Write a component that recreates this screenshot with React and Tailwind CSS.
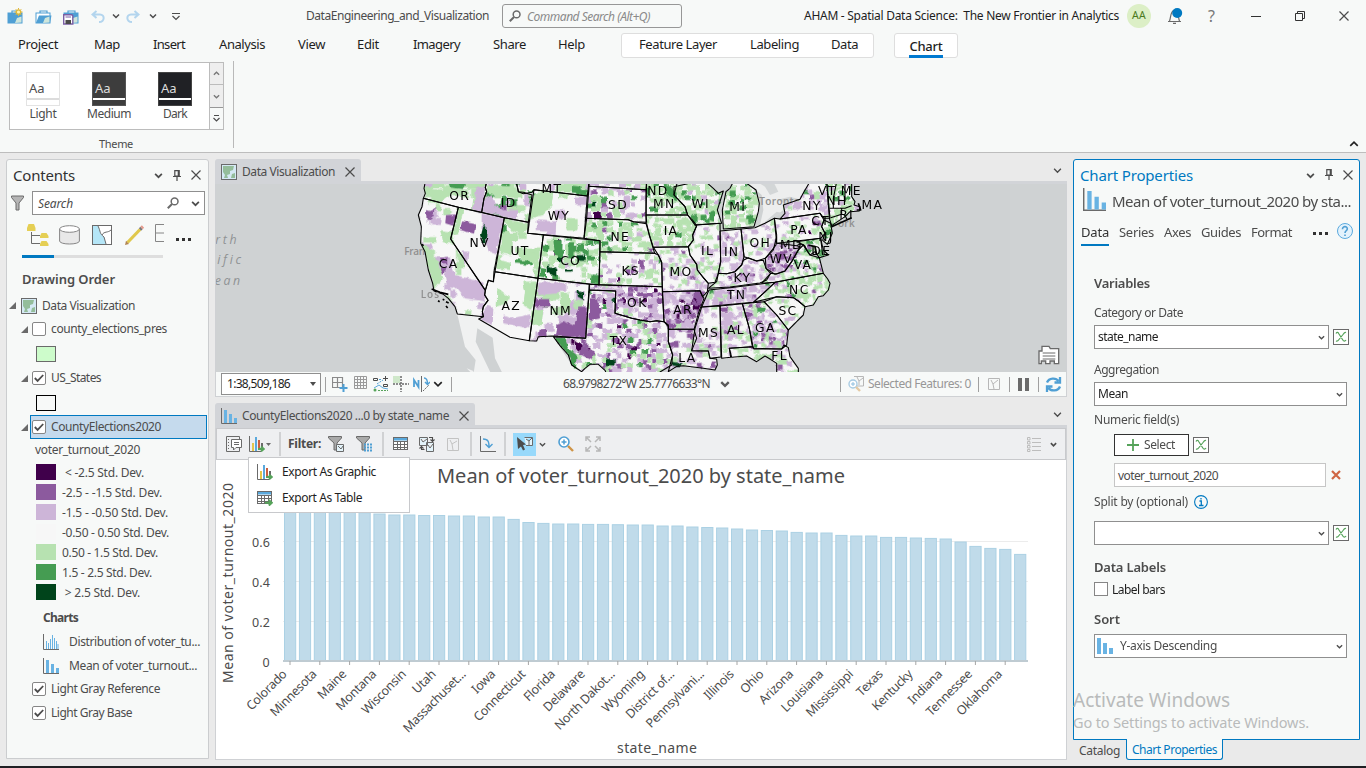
import React, { useLayoutEffect, useRef } from "react";

/* Text whose tracking is adjusted so that it spans a given width. */
function T({ w, className = "", children }) {
  const ref = useRef(null);
  useLayoutEffect(() => {
    const el = ref.current;
    el.style.letterSpacing = "0px";
    const natural = el.getBoundingClientRect().width;
    if (w) el.style.letterSpacing = (w - natural) / String(children).length + "px";
  }, [w, children]);
  return (
    <span ref={ref} className={"block w-fit whitespace-pre shrink-0 [font-variant-ligatures:none] " + className}>
      {children}
    </span>
  );
}

function Svg({ w = 16, h = 16, vb, className = "", children }) {
  return (
    <svg width={w} height={h} viewBox={vb || `0 0 ${w} ${h}`} fill="none" className={"block shrink-0 " + className}>
      {children}
    </svg>
  );
}

const Chevron = ({ className = "", color = "#4c4c4c", s = 8, sw = 1.5 }) => (
  <Svg w={s} h={s} vb="0 0 8 8" className={className}>
    <path d="M1 2.5 L4 5.5 L7 2.5" stroke={color} strokeWidth={sw} />
  </Svg>
);
const Close = ({ className = "", s = 10 }) => (
  <Svg w={s} h={s} vb="0 0 10 10" className={className}>
    <path d="M.5 .5 L9.5 9.5 M9.5 .5 L.5 9.5" stroke="#4c4c4c" strokeWidth="1.2" />
  </Svg>
);
const Pin = ({ className = "" }) => (
  <Svg w={8} h={11} className={className}>
    <path d="M1.8 .6 H6.2 V6 H1.8 Z M0 6.5 H8 M4 6.5 V11" stroke="#4c4c4c" strokeWidth="1.2" />
    <path d="M5.4 .6 V6" stroke="#4c4c4c" strokeWidth="1.4" />
  </Svg>
);
const Magnifier = ({ className = "" }) => (
  <Svg w={12} h={12} className={className}>
    <circle cx="7.6" cy="4.4" r="3.4" stroke="#6a6a6a" strokeWidth="1.5" />
    <path d="M5 7 L.8 11.2" stroke="#6a6a6a" strokeWidth="2" />
  </Svg>
);
const BarIcon = ({ w = 16, className = "" }) => (
  <Svg w={w} h={w} vb="0 0 16 16" className={className}>
    <path d="M.5 0 V15.5 H16" stroke="#6a6a6a" />
    <path d="M3 2 h3 v13 h-3z M8 6 h3 v9 h-3z M13 10 h3 v5 h-3z" fill="#69b3e3" />
  </Svg>
);
const SortIcon = ({ className = "" }) => (
  <Svg className={className}>
    <path d="M0 0h4v16h-4z M6 5h4v11h-4z M12 10h4v6h-4z" fill="#69b3e3" />
  </Svg>
);
const MapIcon = ({ className = "" }) => (
  <Svg className={className}>
    <rect x=".5" y=".5" width="15" height="15" fill="#d5e9f4" stroke="#6a6a6a" />
    <path d="M2 2 h11 l-1 4 l-3 1 l0 3 l-3 1 l1 3 h-4 l1-3 l-2-3z M11 10 l3 -1 v5 h-4z" fill="#94bd9a" />
  </Svg>
);
const ExportChart = ({ className = "" }) => (
  <Svg className={className}>
    <path d="M.5 0 V15.5 H12" stroke="#6a6a6a" />
    <path d="M3 7h2v8h-2z" fill="#e3c64a" />
    <path d="M6 1h2v14h-2z" fill="#5aa9dd" />
    <path d="M9 4h2v10h-2z" fill="#c9603f" />
    <path d="M12 7h2v4h-2z" fill="#6a6a6a" />
    <path d="M9 13 h5 M12 10.5 l2.8 2.5 l-2.8 2.5" stroke="#56a35a" strokeWidth="1.8" />
  </Svg>
);
const TableIcon = ({ arrow }) => (
  <Svg>
    <rect x=".5" y="1.5" width="14" height="12" fill="#fff" stroke="#6a6a6a" />
    <path d="M1 2 H14 V4.5 H1z" fill="#5aa9dd" />
    <path d="M1 5.5 H15 M1 8.5 H15 M1 11.500 H15 M4.5 5 V13 M7.500 5 V13 M11.5 5 V13" stroke="#6a6a6a" />
    {arrow && <path d="M8 12.8 h6 M11.8 10 l3 2.8 l-3 2.8" stroke="#56a35a" strokeWidth="2" />}
  </Svg>
);
const ExprIcon = ({ className = "" }) => (
  <Svg className={className}>
    <rect x=".5" y=".5" width="15" height="15" fill="#fff" stroke="#6a6a6a" />
    <path d="M3 4.5 C4 2.8 5 3 6 5 L9.5 10.5 C10.5 12.5 12 12.5 13 11 M13 3.5 C12 3 11 4 10 5.5 L6 10.5 C5 12 4 12.5 3 12" stroke="#56a35a" strokeWidth="1.2" />
  </Svg>
);
const Check = ({ on }) => (
  <Svg w={14} h={14} className="shrink-0">
    <rect x=".5" y=".5" width="13" height="13" rx="1.5" fill="#fff" stroke="#868686" />
    {on && <path d="M2.8 7 L5.6 9.9 L11.2 4" stroke="#4c4c4c" strokeWidth="1.8" />}
  </Svg>
);
const Tri = ({ className = "" }) => (
  <Svg w={7} h={7} className={className}>
    <path d="M7 0 V7 H0z" fill="#6a6a6a" />
  </Svg>
);
const Dots = ({ className = "" }) => (
  <div className={"flex gap-[3px] " + className}>
    <i className="size-[3px] bg-[#323232]" />
    <i className="size-[3px] bg-[#323232]" />
    <i className="size-[3px] bg-[#323232]" />
  </div>
);

/* ---------- title bar and ribbon ---------- */

const Briefcase = ({ kind }) => (
  <Svg w={17} h={17}>
    <path d="M5 5 V3 H12 V5" stroke="#4f9fd4" strokeWidth="1.2" />
    <rect x="1" y="5" width="14" height="10" fill={kind === "open" ? "#fff" : "#4f9fd4"} stroke="#4f9fd4" />
    {kind === "open" && <path d="M1 15 L4 7.5 H16.5 L15 15z" fill="#4f9fd4" />}
    <path d="M8 15 L10 10 L14.5 8.5 V14.5z" fill="#cfe6dc" />
    {kind === "new" && (
      <g>
        <circle cx="11.5" cy="4" r="2.2" fill="#fff3b0" stroke="#dfb83a" strokeWidth="1.3" />
        <path d="M11.5 0V1.5M11.5 6.5V8M7.5 4H9M14 4H15.5M8.7 1.2L9.8 2.3M13.2 5.7L14.3 6.8M14.3 1.2L13.2 2.3M9.8 5.7L8.7 6.8" stroke="#dfb83a" />
      </g>
    )}
    {kind === "save" && (
      <g>
        <path d="M.7 6.7 H8.8 L9.8 7.7 V16 H.7z" fill="#fff" stroke="#7b5fa5" strokeWidth="1.4" />
        <rect x="2.5" y="12" width="5.5" height="4" fill="#4c4c4c" />
        <path d="M2.5 9 H8" stroke="#7b5fa5" />
      </g>
    )}
  </Svg>
);
const Undo = ({ flip }) => (
  <Svg w={14} h={13} className={flip ? "-scale-x-100" : ""}>
    <path d="M5.5 1 L1.5 4.5 L5.5 8 M1.5 4.5 H9 C14 4.5 14 12 8 12" stroke="#b3d5ee" strokeWidth="2" />
  </Svg>
);

function TitleBar() {
  return (
    <div className="flex h-8 items-center">
      <div className="flex w-[306px] items-center pl-[7px]">
        <div className="w-7"><Briefcase kind="new" /></div>
        <div className="w-7"><Briefcase kind="open" /></div>
        <div className="w-[28px]"><Briefcase kind="save" /></div>
        <div className="w-[21px]"><Undo /></div>
        <div className="w-[14px]"><Chevron /></div>
        <div className="w-[23px]"><Undo flip /></div>
        <div className="w-[22px]"><Chevron /></div>
        <Svg w={10} h={9}><path d="M1 1.5H9M1.500 4L5 7.5L8.5 4" stroke="#4c4c4c" strokeWidth="1.2" /></Svg>
      </div>
      <div className="w-[196px]"><T w={183} className="text-xs text-[#4c4c4c]">DataEngineering_and_Visualization</T></div>
      <div className="flex h-6 w-[180px] items-center rounded-[3px] border border-[#979797] pl-[6px]">
        <Magnifier className="mr-[6px]" />
        <T w={123} className="pt-px text-xs italic text-[#8a8a8a]">Command Search (Alt+Q)</T>
      </div>
      <div className="ml-[122px] w-[323px]"><T w={315} className="text-xs text-[#1e1e1e]">AHAM - Spatial Data Science:  The New Frontier in Analytics</T></div>
      <div className="flex size-6 items-center justify-center rounded-full bg-[#dcefc6]"><T w={14} className="text-[10.5px] text-[#4b7a1e]">AA</T></div>
      <Svg w={16} h={16} className="ml-4">
        <path d="M1 13.5 H14 M2.5 13 C4 10 3 3 7.5 2 C12 3 11 10 12.5 13 M6 15.3H9" stroke="#6a6a6a" strokeWidth="1.2" />
        <circle cx="10.2" cy="5" r="5" fill="#0079c1" />
      </Svg>
      <div className="ml-[25px] w-[43px] text-base text-[#777]">?</div>
      <div className="h-px w-[10px] bg-[#323232]" />
      <Svg w={10} h={10} className="ml-[34px]"><path d="M.5 2.5H7.5V9.5H.5zM2.5 2V.5H9.5V7.5H8" stroke="#323232" /></Svg>
      <Close className="ml-[34px]" />
    </div>
  );
}

function Ribbon() {
  const tabs = [
    ["Project", 40, "w-[76px]"], ["Map", 26, "w-[59px]"], ["Insert", 32, "w-[66px]"], ["Analysis", 46, "w-[79px]"],
    ["View", 27, "w-[59px]"], ["Edit", 22, "w-[56px]"], ["Imagery", 47, "w-[80px]"], ["Share", 33, "w-[65px]"], ["Help", 27, "w-[63px]"],
  ];
  const themes = [
    ["Light", 27, "bg-white border-[#e3e3e3] text-[#4c4c4c]", "bg-[#dcdcdc]"],
    ["Medium", 44, "bg-[#3d3d3d] border-[#555] text-[#ddd]", "bg-white"],
    ["Dark", 24, "bg-[#202125] border-[#444] text-[#ddd]", "bg-white"],
  ];
  return (
    <div className="flex h-[153px] shrink-0 flex-col border-b border-[#bdbdbd] bg-[#f7f9f8]">
      <TitleBar />
      <div className="flex h-[26px] items-center pl-[18px]">
        {tabs.map(([t, w, c]) => <div key={t} className={c}><T w={w} className="text-[13px] text-[#1e1e1e]">{t}</T></div>)}
        <div className="flex h-[25px] w-[253px] items-center rounded-[3px] border border-[#dedede] bg-white pl-[17px]">
          <div className="w-[111px]"><T w={78} className="text-[13px] text-[#1e1e1e]">Feature Layer</T></div>
          <div className="w-[81px]"><T w={49} className="text-[13px] text-[#1e1e1e]">Labeling</T></div>
          <T w={27} className="text-[13px] text-[#1e1e1e]">Data</T>
        </div>
        <div className="ml-5 flex h-[25px] w-16 flex-col items-center justify-between rounded-[3px] border border-[#dedede] bg-white">
          <T w={33} className="text-[13px] font-medium leading-[24px] text-[#1e1e1e]">Chart</T>
          <div className="-mt-[3px] -mb-px h-[3px] w-[34px] shrink-0 bg-[#0079d0]" />
        </div>
      </div>
      <div className="flex flex-1 pt-[3px]">
        <div className="h-[87px] w-[234px] shrink-0 border-r border-[#b9b9b9] pl-[9px]">
          <div className="mt-[1px] flex h-[68px] w-[215px] border border-[#bcbcbc] bg-white">
            <div className="flex flex-1">
              {themes.map(([t, w, c, l]) => (
                <div key={t} className="flex w-[66px] flex-col items-center pt-[9px]">
                  <div className={"flex size-[34px] flex-col border " + c}>
                    <span className="h-[25px] pl-[2px] pt-[3px] text-[13px] leading-[24px]">Aa</span>
                    <span className={"h-[2px] " + l} />
                  </div>
                  <T w={w} className="text-xs leading-[16px] text-[#4c4c4c]">{t}</T>
                </div>
              ))}
            </div>
            <div className="flex w-[14px] flex-col border-l border-[#bcbcbc] bg-[#eeeeee]">
              <div className="flex h-[22px] items-center justify-center border-b border-[#bcbcbc]"><Chevron s={7} className="rotate-180" color="#777" /></div>
              <div className="flex h-[23px] items-center justify-center border-b border-[#979797]"><Chevron s={7} color="#777" /></div>
              <div className="flex flex-1 items-center justify-center bg-[#f7f9f8]"><Svg w={7} h={7}><path d="M1 .5H6M.5 3L3.5 6L6.5 3" stroke="#4c4c4c" strokeWidth="1.2" /></Svg></div>
            </div>
          </div>
          <div className="flex h-[19px] justify-center pr-[10px] pt-[6px]"><T w={34} className="text-[11px] leading-4 text-[#4c4c4c]">Theme</T></div>
        </div>
        <div className="flex h-[88px] flex-1 items-end justify-end pr-[7px]"><Chevron s={10} sw={1.3} className="rotate-180" color="#222" /></div>
      </div>
    </div>
  );
}

/* ---------- contents pane ---------- */

function Contents() {
  const classes = [
    [" < -2.5 Std. Dev.", 82, "bg-[#40004b]"], ["-2.5 - -1.5 Std. Dev.", 100, "bg-[#8c5a9e]"], ["-1.5 - -0.50 Std. Dev.", 106, "bg-[#cdb5d8]"],
    ["-0.50 - 0.50 Std. Dev.", 107, "bg-[#f7f7f7]"], ["0.50 - 1.5 Std. Dev.", 96, "bg-[#b7e2b1]"], ["1.5 - 2.5 Std. Dev.", 90, "bg-[#459c52]"], [" > 2.5 Std. Dev.", 78, "bg-[#00441b]"],
  ];
  return (
    <div className="ml-[6px] mt-[6px] flex h-[600px] w-[203px] shrink-0 flex-col rounded-t-[3px] border border-[#cbcdcf] bg-[#f7f9f8] text-[#4c4c4c]">
      <div className="flex h-[30px] items-center pl-[6px]">
        <T w={62} className="text-[15px] text-[#323232]">Contents</T>
        <Chevron className="ml-[79px] mr-[10px]" s={9} />
        <Pin className="mr-[10px]" />
        <Close />
      </div>
      <div className="flex h-6 items-center pl-1 mt-px">
        <Svg w={13} h={16} className="mr-2"><path d="M.5 1H12.5V2.5L8 8V15H5V8L.5 2.5z" fill="#b5b5b5" stroke="#6a6a6a" /></Svg>
        <div className="flex h-6 w-[173px] items-center border border-[#8f8f8f] bg-white pl-[5px]">
          <T w={35} className="mr-[94px] pt-px text-xs italic">Search</T>
          <Magnifier className="mr-[12px]" />
          <Chevron s={9} />
        </div>
      </div>
      <div className="flex h-10 items-center pl-5">
        <Svg w={22} h={22} className="mr-[10px]">
          <path d="M4.5 8V19.5H13M4 11.500H13" stroke="#6a6a6a" />
          <path d="M1.5 0H7L8.5 4V7H0V4zM14.5 9H19.5L21.5 12V14H13V12zM14.5 17H19.5L21.5 20V22H13V20z" fill="#e5cf54" />
        </Svg>
        <Svg w={21} h={20} className="mr-3"><path d="M.6 4V16C.6 20 20.4 20 20.4 16V4" fill="#e8e8e8" stroke="#868686" /><ellipse cx="10.5" cy="4" rx="9.9" ry="3.3" fill="#fff" stroke="#868686" /></Svg>
        <Svg w={20} h={20} className="mr-[13px]"><rect x=".5" y=".5" width="19" height="19" fill="#fff" stroke="#6a6a6a" /><path d="M1 1H6C9 7 7 8 12 12L14 19H1z" fill="#b5e6f7" /><path d="M6 1C9 7 7 8 12 12L14 19M10 10C12 6 16 8 19 5" stroke="#6a6a6a" /></Svg>
        <Svg w={20} h={20} className="mr-[10px]"><path d="M2.5 17.5L15 4.5" stroke="#e0c84c" strokeWidth="3.2" /><path d="M15 4.5L16.5 3" stroke="#777" strokeWidth="3.2" /><path d="M16.5 3L18 1.5" stroke="#e49a8c" strokeWidth="3.2" /><path d="M0 20L1 15.8L4 19z" fill="#b18452" /></Svg>
        <Svg w={9} h={18} className="mb-1 mr-3"><path d="M9 .5H.5V17.5H9M.5 9H9" stroke="#868686" /></Svg>
        <Dots className="mt-2" />
      </div>
      <div className="ml-[15px] flex h-[3px] w-[141px] bg-[#dedede]"><div className="w-8 bg-[#0079c1]" /></div>
      <div className="flex h-[36px] items-center pl-[15px] pt-[7px]"><T w={93} className="text-[13px] font-semibold">Drawing Order</T></div>
      <div className="flex h-[23px] items-center pl-[2px]"><Tri className="mr-[5px]" /><MapIcon className="mr-[5px]" /><T w={93} className="text-xs">Data Visualization</T></div>
      <div className="flex h-6 items-center pl-[14px]"><Tri className="mr-[4px]" /><Check /><T w={116} className="ml-[5px] text-xs">county_elections_pres</T></div>
      <div className="flex h-[25px] items-center pl-[29px]"><div className="h-4 w-5 border border-[#6a6a6a] bg-[#cdfccb]" /></div>
      <div className="flex h-6 items-center pl-[14px]"><Tri className="mr-[4px]" /><Check on /><T w={50} className="ml-[5px] text-xs">US_States</T></div>
      <div className="flex h-[25px] items-center pl-[29px]"><div className="h-4 w-5 border border-black" /></div>
      <div className="flex h-6 items-center pl-[14px]"><Tri className="mr-[2px]" /><div className="flex h-6 w-[177px] items-center border border-[#0079c1] bg-[#c5daed] pl-px"><Check on /><T w={110} className="ml-[5px] text-xs">CountyElections2020</T></div></div>
      <div className="flex h-[23px] items-center pb-[2px] pl-[28px]"><T w={105} className="text-xs">voter_turnout_2020</T></div>
      {classes.map(([t, w, c]) => (
        <div key={t} className="flex h-5 items-center pl-[29px]"><div className={"mr-[6px] h-4 w-5 " + c} /><T w={w} className="pt-px text-xs">{t}</T></div>
      ))}
      <div className="flex h-7 items-center pl-[36px] pt-[3px]"><T w={35} className="text-xs font-bold">Charts</T></div>
      <div className="flex h-6 items-center pl-[36px]">
        <Svg className="mr-[10px]"><path d="M.5 0V15.5H16" stroke="#6a6a6a" /><path d="M3.5 15V7M5.5 15V9M7.5 15V5M9.5 15V1M11.5 15V4M13.5 15V7M15 15V10" stroke="#69b3e3" /></Svg>
        <T w={131} className="text-xs">Distribution of voter_tu...</T>
      </div>
      <div className="flex h-6 items-center pl-[36px]"><BarIcon className="mr-[10px]" /><T w={128} className="text-xs">Mean of voter_turnout...</T></div>
      <div className="-mt-px flex h-6 items-center pl-[25px]"><Check on /><T w={109} className="ml-[5px] text-xs">Light Gray Reference</T></div>
      <div className="flex h-6 items-center pl-[25px]"><Check on /><T w={81} className="ml-[5px] text-xs">Light Gray Base</T></div>
    </div>
  );
}

/* ---------- map ---------- */

const COL = ["#40004b", "#8c5a9e", "#cdb5d8", "#f7f7f7", "#b7e2b1", "#459c52", "#00441b"];
/* name, outline, cell size, weights per class in percent */
const STATES = [
  ["OR", "648,70 642,100 646,115 640,130 745,157 815,172 822,130 830,110 826,98 832,70", 38, [0, 0, 2, 18, 76, 4, 0]],
  ["ID", "832,70 826,98 830,110 822,130 815,172 883,188 955,202 966,120 940,112 925,110 922,95 915,70", 22, [0, 2, 16, 36, 36, 10, 0]],
  ["MT", "915,70 922,95 925,110 940,116 966,112 972,104 1132,123 1138,70", 22, [0, 4, 16, 30, 34, 16, 0]],
  ["WY", "972,104 1132,123 1122,250 953,235", 32, [0, 0, 14, 66, 20, 0, 0]],
  ["CA", "640,130 745,157 722,252 826,406 824,420 834,436 820,455 817,470 820,485 742,477 735,455 715,430 700,418 672,408 668,385 655,345 645,290 632,265 634,215 625,180 636,155", 20, [0, 0, 14, 72, 14, 0, 0]],
  ["NV", "745,157 883,188 852,350 850,380 835,376 826,406 722,252", 44, [0, 0, 0, 100, 0, 0, 0]],
  ["UT", "883,188 955,202 953,235 1000,240 984,370 855,350", 24, [0, 0, 0, 70, 28, 2, 0]],
  ["CO", "1000,240 1170,257 1167,390 984,370", 17, [2, 1, 3, 30, 48, 12, 4]],
  ["AZ", "855,350 984,370 958,557 900,547 806,492 820,485 817,470 820,455 834,436 824,420 826,406 835,376 850,380", 50, [0, 0, 0, 100, 0, 0, 0]],
  ["NM", "984,370 1138,388 1127,550 1030,543 985,545 980,558 958,557", 24, [0, 4, 44, 38, 14, 0, 0]],
  ["ND", "1138,70 1310,70 1308,104 1137,94", 16, [0, 6, 26, 36, 24, 8, 0]],
  ["SD", "1137,94 1308,104 1308,180 1310,202 1270,200 1255,194 1130,190", 17, [2, 8, 26, 34, 24, 4, 2]],
  ["NE", "1130,190 1255,194 1270,200 1310,206 1318,240 1328,275 1334,295 1170,290 1170,257 1122,250", 15, [0, 1, 7, 36, 48, 8, 0]],
  ["KS", "1170,290 1334,295 1345,300 1355,322 1357,395 1167,390", 14, [1, 2, 18, 52, 26, 1, 0]],
  ["OK", "1138,388 1357,395 1362,500 1340,497 1320,500 1290,495 1265,490 1240,482 1215,475 1217,408 1138,405", 15, [2, 34, 44, 18, 2, 0, 0]],
  ["TX", "1138,405 1217,408 1215,475 1240,482 1265,490 1290,495 1320,500 1340,497 1362,500 1375,515 1375,560 1388,600 1385,630 1350,651 1340,680 1200,680 1185,646 1165,628 1140,628 1125,640 1115,650 1085,630 1075,600 1050,572 1030,545 1127,550", 15, [3, 12, 37, 28, 14, 4, 2]],
  ["MN", "1310,70 1405,70 1392,120 1425,155 1433,180 1308,180", 15, [0, 0, 3, 30, 57, 10, 0]],
  ["IA", "1308,180 1433,180 1448,196 1460,212 1448,240 1450,255 1435,275 1330,277 1318,240 1308,205", 14, [0, 0, 2, 30, 64, 4, 0]],
  ["MO", "1330,277 1435,275 1440,300 1460,328 1462,345 1480,368 1495,385 1492,410 1478,425 1470,407 1357,410 1355,322 1345,300", 13, [0, 2, 32, 56, 10, 0, 0]],
  ["AR", "1357,410 1470,407 1478,425 1482,430 1465,475 1453,520 1452,523 1375,523 1375,510 1362,500", 15, [4, 44, 42, 9, 1, 0, 0]],
  ["LA", "1375,523 1452,523 1460,550 1445,587 1495,588 1500,610 1520,612 1522,630 1515,645 1480,640 1420,632 1400,634 1375,650 1388,600 1375,560", 15, [0, 8, 38, 36, 16, 2, 0]],
  ["MS", "1475,456 1530,453 1533,606 1500,610 1495,588 1445,587 1455,520", 13, [0, 3, 36, 49, 12, 0, 0]],
  ["AL", "1530,453 1597,446 1618,520 1627,575 1558,580 1562,607 1535,610", 14, [0, 2, 40, 44, 14, 0, 0]],
  ["GA", "1597,446 1662,440 1700,480 1735,525 1730,570 1715,582 1630,580 1618,520", 12, [0, 12, 36, 30, 20, 2, 0]],
  ["FL", "1558,580 1628,575 1632,582 1715,582 1722,570 1735,578 1740,605 1765,640 1765,680 1705,680 1700,650 1700,625 1680,612 1665,603 1640,620 1610,603 1565,607", 16, [0, 2, 18, 40, 38, 2, 0]],
  ["SC", "1662,440 1700,425 1750,428 1765,438 1785,455 1780,480 1760,500 1735,525 1700,480", 13, [0, 1, 8, 76, 15, 0, 0]],
  ["NC", "1695,382 1840,355 1853,372 1860,385 1855,405 1840,422 1825,425 1810,450 1785,455 1765,438 1750,428 1700,425 1630,442 1660,415", 13, [0, 1, 4, 38, 52, 5, 0]],
  ["TN", "1497,405 1560,398 1695,382 1660,415 1630,442 1475,456", 13, [0, 10, 64, 22, 3, 1, 0]],
  ["KY", "1495,400 1520,380 1525,355 1550,356 1575,350 1595,330 1600,316 1615,308 1640,318 1660,316 1668,340 1682,355 1670,375 1650,384 1560,396", 12, [0, 10, 36, 42, 12, 0, 0]],
  ["VA", "1655,385 1682,355 1700,357 1725,348 1745,320 1765,285 1780,270 1790,285 1800,300 1828,308 1840,355 1695,382", 12, [0, 1, 16, 34, 40, 9, 0]],
  ["WV", "1700,245 1700,265 1760,272 1770,275 1745,320 1725,348 1695,358 1668,340 1666,310 1690,285", 12, [0, 38, 50, 12, 0, 0, 0]],
  ["OH", "1593,222 1635,218 1665,205 1693,190 1700,240 1698,270 1666,310 1640,318 1602,305", 13, [0, 1, 22, 62, 15, 0, 0]],
  ["IN", "1530,228 1593,222 1602,305 1595,330 1575,350 1550,356 1525,355 1532,320", 13, [0, 5, 52, 37, 6, 0, 0]],
  ["IL", "1455,210 1530,205 1532,320 1525,355 1515,382 1495,385 1480,368 1462,345 1460,328 1440,300 1435,275 1450,255 1448,240 1460,212", 13, [0, 1, 18, 54, 27, 0, 0]],
  ["WI", "1392,95 1430,87 1475,70 1510,100 1525,115 1540,108 1522,165 1535,205 1455,210 1433,180 1425,155 1392,120", 14, [0, 0, 3, 34, 55, 8, 0]],
  ["MI", "1548,110 1560,100 1575,70 1610,85 1638,105 1648,145 1645,170 1632,215 1540,222 1537,165", 14, [0, 0, 3, 30, 58, 8, 1]],
  ["PA", "1693,190 1710,192 1830,175 1842,195 1835,215 1845,235 1832,250 1700,265", 13, [1, 1, 12, 66, 20, 0, 0]],
  ["NY", "1710,192 1725,175 1720,150 1770,133 1782,110 1800,80 1850,80 1860,190 1842,190 1830,175", 15, [0, 3, 38, 42, 16, 1, 0]],
  ["NJ", "1842,195 1862,205 1867,235 1852,268 1838,256 1845,235 1835,215", 12, [0, 1, 8, 30, 41, 18, 2]],
  ["MD", "1760,260 1832,250 1840,285 1855,300 1828,308 1815,290 1800,300 1780,270", 12, [0, 1, 10, 36, 43, 10, 0]],
  ["NE2", "1850,80 1925,70 1925,125 1935,140 1932,150 1950,155 1948,168 1920,170 1905,185 1865,212 1858,190", 14, [0, 0, 6, 26, 50, 16, 2]],
];
const EXTRA_BORDERS = "M1858 160H1905L1925 152M1862 188L1895 178V160M1880 80L1870 130V160M1905 80V140M1760 272C1775 262 1785 268 1790 285M1832 250L1838 300";
const PATCHES = [
  [3, "690,150 720,118 790,130 785,166 745,157"], [2, "800,95 826,98 815,172 788,166"], [5, "712,80 770,80 758,102 720,98"],
  [4, "832,90 915,95 925,112 920,130 880,120 850,118 830,112"], [2, "822,130 845,118 855,150 880,165 925,165 920,192 815,172"], [5, "876,125 890,125 890,150 870,150"],
  [5, "970,118 990,120 990,158 970,158"], [5, "1086,92 1112,95 1112,118 1086,116"],
  [2, "980,196 1042,200 1040,232 980,228"], [2, "1035,165 1065,165 1065,190 1035,188"], [2, "1095,125 1132,125 1130,150 1095,148"], [4, "990,108 1030,112 1025,150 1000,180 960,190 965,130"],
  [1, "648,165 660,168 680,160 668,185 650,200"], [2, "665,190 695,192 692,210 668,208"], [1, "708,180 742,178 728,212 706,205"], [1, "757,196 798,205 792,236 750,225"],
  [4, "745,157 760,162 745,235 724,240"], [6, "820,207 829,212 829,262 813,262"], [2, "815,175 883,188 858,295 835,288 826,240 815,230"], [6, "813,240 822,207 829,212 829,268"],
  [2, "755,290 778,290 775,320 760,325"], [2, "670,305 720,310 735,360 820,382 828,440 765,430 740,400 712,390 705,350 675,335"], [1, "690,338 706,338 702,358 690,356"], [1, "690,308 712,308 712,325 695,325"],
  [4, "630,260 650,275 680,310 700,370 670,405 655,345 645,290"], [4, "690,225 725,230 735,270 700,260"],
  [4, "885,192 955,205 940,240 900,225"], [4, "875,240 905,250 905,300 868,295"], [4, "855,310 905,325 900,345 860,340"], [5, "915,312 965,318 965,330 915,326"], [4, "920,285 985,300 985,325 925,310"],
  [5, "1030,255 1058,258 1056,312 1035,300"], [5, "1075,262 1092,262 1090,310 1075,310"], [5, "1100,265 1125,265 1125,295 1100,290"], [3, "1045,345 1115,335 1115,380 1050,375"], [6, "1010,330 1025,335 1042,345 1042,365 1022,358 1010,352"], [6, "1065,342 1085,342 1085,350 1065,350"], [5, "990,335 1008,340 1008,368 988,365"], [6, "1100,300 1124,300 1124,318 1100,316"], [5, "1145,355 1168,358 1166,388 1142,385"],
  [4, "940,380 980,380 970,450 962,465 940,450 945,410"], [4, "862,400 900,430 890,445 860,455"], [2, "812,488 830,450 850,460 848,510 815,495"],
  [2, "878,480 905,490 960,478 958,520 880,505"], [2, "985,380 1050,382 1045,415 985,420"], [1, "975,432 1020,432 1022,455 975,455"], [1, "1040,505 1060,498 1090,510 1125,520 1124,550 1035,543"], [1, "1105,455 1130,455 1128,545 1090,530"], [1, "985,522 1008,520 1010,545 985,545"], [6, "1103,408 1122,415 1122,435 1103,425"], [4, "1055,420 1080,420 1080,480 1050,470"], [4, "965,465 1000,465 995,510 960,505"],
  [5, "1035,548 1065,548 1075,580 1100,600 1098,640 1085,625 1075,600 1055,575"], [0, "1095,555 1120,572 1110,590 1095,580"], [1, "1115,572 1155,590 1145,615 1110,598"], [6, "1188,610 1218,615 1215,632 1188,630"], [0, "1152,172 1175,172 1175,190 1152,190"], [1, "1140,430 1165,430 1170,490 1140,495"], [0, "1265,572 1280,575 1278,588 1263,585"],
  [5, "1475,180 1490,178 1490,192 1475,195"], [5, "1500,172 1512,168 1512,200 1498,195"], [5, "1610,182 1630,176 1628,192 1608,195"], [1, "1452,410 1485,410 1470,450 1445,450"], [0, "1450,430 1460,430 1458,445"], [0, "1450,450 1475,450 1470,465 1452,462"],
  [6, "1385,620 1415,625 1412,635 1388,632"], [5, "1360,80 1400,110 1400,140 1370,120"],
];
const LABELS = [
  ["OR", 747, 122], ["ID", 894, 144], ["MT", 1024, 101], ["WY", 1045, 182], ["SD", 1222, 149], ["NE", 1229, 244], ["NV", 807, 264], ["UT", 928, 287], ["CO", 1080, 317], ["CA", 714, 326], ["KS", 1260, 347], ["AZ", 902, 452], ["NM", 1050, 467], ["OK", 1280, 443], ["TX", 1225, 557],
  ["ND", 1342, 107], ["MN", 1361, 147], ["WI", 1470, 147], ["MI", 1581, 156], ["IA", 1381, 228], ["IL", 1491, 288], ["IN", 1563, 290], ["OH", 1649, 263], ["PA", 1765, 224], ["NY", 1804, 152], ["VT", 1850, 107], ["ME", 1922, 107], ["NH", 1879, 136], ["MA", 1985, 150], ["RI", 1908, 180], ["CT", 1830, 197], ["NJ", 1846, 244], ["MD", 1742, 270], ["DE", 1832, 288], ["WV", 1712, 311], ["VA", 1777, 328], ["MO", 1411, 350], ["KY", 1595, 367], ["TN", 1578, 420], ["NC", 1766, 404], ["SC", 1732, 468], ["GA", 1664, 518], ["AL", 1576, 525], ["MS", 1494, 533], ["AR", 1417, 464], ["LA", 1430, 608], ["FL", 1707, 602],
];

function counties() {
  let seed = 7;
  const rnd = () => ((seed = (seed * 16807) % 2147483647) / 2147483647);
  return STATES.map(([name, pts, size, weights]) => {
    const p = pts.split(" ").map((q) => q.split(",").map(Number));
    const xs = p.map((q) => q[0]), ys = p.map((q) => q[1]);
    const cells = COL.map(() => "");
    for (let y = Math.min(...ys) - size / 2; y < Math.min(680, Math.max(...ys)); y += size)
      for (let x = Math.min(...xs) - size / 2; x < Math.max(...xs); x += size) {
        let r = rnd() * 100, k = 0;
        while (k < 6 && r >= weights[k]) r -= weights[k++];
        if (k === 3) continue;
        const s = k === 0 || k === 6 ? 0.7 : 0.85 + rnd() * 0.4;
        const jx = rnd() * size * 0.4, jy = rnd() * size * 0.4;
        cells[k] += `M${(x + jx).toFixed(0)} ${(y + jy).toFixed(0)}h${(size * s).toFixed(0)}v${(size * (0.8 + rnd() * 0.35)).toFixed(0)}h${(-size * s).toFixed(0)}z`;
      }
    return { name, pts, cells };
  });
}
const COUNTIES = counties();

function MapView() {
  return (
    <svg width="850" height="188" viewBox="18 87 2550 564" className="block bg-[#cfd2d3]">
      <defs>
        <filter id="rough" filterUnits="userSpaceOnUse" x="560" y="60" width="1440" height="620" colorInterpolationFilters="sRGB">
          <feTurbulence type="fractalNoise" baseFrequency="0.06" numOctaves="2" seed="3" />
          <feDisplacementMap in="SourceGraphic" scale="14" xChannelSelector="R" yChannelSelector="G" />
        </filter>
        {COUNTIES.map((s) => <clipPath key={s.name} id={"c" + s.name}><polygon points={s.pts} /></clipPath>)}
        <clipPath id="usa">{COUNTIES.map((s) => <polygon key={s.name} points={s.pts} />)}</clipPath>
      </defs>
      <path d="M742 478L815 485L900 545L1030 545L1085 630L1125 660H880L855 610L848 548L802 520L797 560L845 660H790L797 615L765 575z" fill="#f0f1f1" />
      <path d="M770 640L790 648V660z" fill="#f0f1f1" />
      <path d="M1120 640L1165 625L1200 660H1110z" fill="#f0f1f1" />
      <path d="M1610 80H1800L1782 110L1770 133L1725 145L1720 165L1690 190L1650 210L1660 165L1655 120z" fill="#edeeee" />
      <path d="M1640 80H1690L1705 110L1680 120L1665 95zM1725 145L1765 132L1740 125L1700 135zM1660 205L1700 170L1720 175L1690 190z" fill="#d3d6d7" />
      <g fontFamily="Open Sans, sans-serif" fill="#8f9395" fontStyle="italic" fontSize="37" letterSpacing="8">
        <text x="16" y="266">rth</text>
        <text x="22" y="328">i<tspan>f</tspan>ic</text>
        <text x="14" y="391">ean</text>
      </g>
      <g fontFamily="Open Sans, sans-serif" fill="#8f8f8f" fontWeight="600" fontSize="30">
        <text x="583" y="301" textLength="62">Fran</text>
        <text x="1648" y="149" textLength="122">Toronto</text>
        <text x="1884" y="216" textLength="50">ork</text>
      </g>
      <g filter="url(#rough)">
        {COUNTIES.map((s) => (
          <g key={s.name} clipPath={`url(#c${s.name})`}>
            <polygon points={s.pts} fill="#f7f7f7" />
            {s.cells.map((d, i) => <path key={i} d={d} fill={COL[i]} />)}
          </g>
        ))}
        <g clipPath="url(#usa)">{PATCHES.map(([c, pts], i) => <polygon key={i} points={pts} fill={COL[c]} />)}</g>
      </g>
      <g stroke="#000" strokeWidth="3.2" strokeLinejoin="round" fill="none">
        {COUNTIES.map((s) => <polygon key={s.name} points={s.pts} />)}
        <path d={EXTRA_BORDERS} />
        <path d="M684 437l5 3M698 433l5 2M708 440l8 4M708 453l5 6M635 268l6 4M665 402L690 412L715 418M1865 215L1925 188M1945 145L1952 165L1940 165M1795 270L1815 275L1820 300" strokeWidth="5" />
      </g>
      <text x="632" y="430" fontFamily="Open Sans, sans-serif" fill="#8f8f8f" fontWeight="600" fontSize="30" textLength="55">Los</text>
      <g fontFamily="DejaVu Sans, Verdana, sans-serif" fontSize="37" fill="#000" textAnchor="middle" letterSpacing="4">
        {LABELS.map(([t, x, y]) => <text key={t} x={x + 2} y={y + 13}>{t}</text>)}
      </g>
      <g>
        <path d="M2487 588H2496V574H2517L2521 581H2546V626H2533V618H2520V626H2507V618H2494V626H2487z" fill="#fff" stroke="#6a6a6a" strokeWidth="4" />
        <path d="M2498 594H2536M2498 603H2536M2498 612H2536" stroke="#6a6a6a" strokeWidth="3" />
      </g>
    </svg>
  );
}

const Sep = ({ className = "" }) => <div className={"h-[15px] w-px shrink-0 bg-[#a0a0a0] " + className} />;

function MapStatus() {
  return (
    <div className="flex h-6 items-center bg-[#f7f9f8] text-xs text-[#4c4c4c]">
      <div className="ml-[5px] flex h-[22px] w-[100px] items-center justify-between border border-[#8f8f8f] bg-white pl-[5px] pr-1 text-[#1e1e1e]">
        <T w={63}>1:38,509,186</T>
        <Svg w={6} h={4}><path d="M0 0H6L3 4z" fill="#4c4c4c" /></Svg>
      </div>
      <Sep className="ml-1 mr-[6px]" />
      <Svg className="mr-[6px]"><path d="M.5 1.5H10.5V11.5H.5zM5.5 1V12M0 6.5H11" stroke="#8a8a8a" strokeWidth="1.2" /><path d="M11.5 8V16M7.5 12H15.5" stroke="#4f9fd4" strokeWidth="2" /></Svg>
      <Svg w={13} h={13} className="mb-[3px] mr-[6px]"><path d="M.5 .5H12.5V12.5H.5zM3.5 0V13M6.500 0V13M9.5 0V13M0 3.5H13M0 6.5H13M0 9.5H13" stroke="#9a9a9a" /></Svg>
      <Svg className="mr-1"><path d="M.5 2.5H4.5V4.500H.5zM12.5 0V5M10 2.5H15M10.5 8.5H14.5V10.500H10.500z" stroke="#4c4c4c" /><path d="M6 3.500H8M4 8L10 4" stroke="#4f9fd4" strokeDasharray="2 1" /><path d="M1 12L6 9L10 12L15 13" stroke="#5aa9dd" /><circle cx="2" cy="14" r="1.5" fill="#56a35a" /><path d="M5 14.5H15" stroke="#56a35a" strokeDasharray="2 1" /></Svg>
      <Svg className="mr-1"><rect x="0" y="0" width="7" height="7" fill="#cfe8ca" /><path d="M8 0V16M0 8H16" stroke="#6a6a6a" strokeWidth="1.5" strokeDasharray="2 1" /></Svg>
      <Svg w={17} h={16} className="mr-[3px]"><path d="M1 11V4L5.500 11V4" stroke="#4f9fd4" strokeWidth="1.8" /><path d="M8.5 0V16" stroke="#6a6a6a" /><path d="M11 2C14 2 14.5 5 14.5 8M12 6L14.5 8.5L17 6" stroke="#4f9fd4" strokeWidth="1.4" /><path d="M10 15L16 9" stroke="#6a6a6a" strokeDasharray="2 1" /></Svg>
      <Chevron s={10} sw={1.3} color="#222" />
      <Sep className="ml-2" />
      <T w={147} className="ml-[111px]">68.9798272°W 25.7776633°N</T>
      <Chevron s={10} sw={1.9} className="ml-[10px]" color="#5a5a5a" />
      <Sep className="ml-[110px] mr-[7px]" />
      <Svg className="mr-1"><path d="M6 .5H15.5V10H9M9 1L11 5L15 2M11 5V9" stroke="#b7b7b7" /><circle cx="5" cy="8" r="4" fill="#fff" stroke="#a8cbe2" strokeWidth="1.4" /><path d="M3 8H7M5 6V10" stroke="#8fbfdf" /><path d="M8 11L12 15" stroke="#e3c9a4" strokeWidth="2.4" /></Svg>
      <T w={103} className="text-[#979797]">Selected Features: 0</T>
      <Sep className="ml-[7px] mr-[9px]" />
      <Svg w={12} h={12} className="mr-[9px]"><path d="M.5 .5H11.5V11.5H.5zM3 2L5 6L10 2M5 6L6 11" stroke="#b7b7b7" /></Svg>
      <Sep className="mr-2" />
      <div className="flex gap-[3px]"><i className="h-[13px] w-1 bg-[#6a6a6a]" /><i className="h-[13px] w-1 bg-[#6a6a6a]" /></div>
      <Sep className="ml-[9px] mr-[6px]" />
      <Svg w={17} h={17}><path d="M2 6.500C4 1.500 11 1.500 13.500 5M15 1V6.500H9.500M15 10.500C13 15.500 6 15.500 3.500 12M2 16V10.500H7.500" stroke="#4f9fd4" strokeWidth="2.3" /></Svg>
    </div>
  );
}

/* ---------- chart ---------- */

const TOPS = [506, 508, 509, 511, 512, 512.7, 514, 515, 515, 515.5, 515.5, 516, 516, 517, 517, 519.4, 522.5, 523.4, 524, 524, 524.4, 524.4, 524.7, 525, 525, 526, 526, 527, 527.5, 528, 529, 530, 530.5, 531, 532.4, 533, 533, 535.4, 536, 536, 537.4, 537.4, 538, 538.4, 539, 542, 546.4, 548.4, 549.4, 554.4];
const NAMES = ["Colorado", "Minnesota", "Maine", "Montana", "Wisconsin", "Utah", "Massachuset...", "Iowa", "Connecticut", "Florida", "Delaware", "North Dakot...", "Wyoming", "District of...", "Pennsylvani...", "Illinois", "Ohio", "Arizona", "Louisiana", "Mississippi", "Texas", "Kentucky", "Indiana", "Tennessee", "Oklahoma"];

function Chart() {
  return (
    <svg width="850" height="299" viewBox="216 460 850 299" className="block bg-white" fontFamily="Noto Sans, Open Sans, sans-serif" fill="#4c4c4c">
      <text x="437" y="483" fontSize="20" textLength="408">Mean of voter_turnout_2020 by state_name</text>
      {[541.5, 581.5, 621.5].map((y) => <path key={y} d={`M283 ${y}H1028`} stroke="#ececec" />)}
      {TOPS.map((y, i) => {
        const x = 284.5 + i * 14.9;
        return <rect key={i} x={x} y={y} width="11.2" height={660.5 - y} fill="#c0dbea" stroke="#abd1e4" />;
      })}
      <path d="M283 661H1028" stroke="#bfcbd2" strokeWidth="2" />
      {NAMES.map((n, i) => (
        <g key={n}>
          <path d={`M${290 + i * 29.8} 661V665`} stroke="#a5a5a5" />
          <text fontSize="12.5" textAnchor="end" letterSpacing="-.3" transform={`translate(${287.5 + i * 29.8} 675) rotate(-45)`}>{n}</text>
        </g>
      ))}
      {[["0.6", 541], ["0.4", 581], ["0.2", 621]].map(([t, y]) => <text key={t} x="252" y={y + 6} fontSize="12.5" textLength="18">{t}</text>)}
      <text x="262.5" y="667" fontSize="12.5">0</text>
      <text x="617" y="753" fontSize="14" textLength="80">state_name</text>
      <text transform="translate(233 683) rotate(-90)" fontSize="14" textLength="200">Mean of voter_turnout_2020</text>
    </svg>
  );
}

const TSep = ({ className = "" }) => <div className={"h-6 w-[2px] shrink-0 bg-[#d0d1d3] " + className} />;
const Funnel = ({ children }) => (
  <Svg w={17} h={17}><path d="M.5 .5H13.5V2L9 7V14H6V7L.5 2z" fill="#a9a9a9" stroke="#6a6a6a" />{children}</Svg>
);

function ChartToolbar() {
  return (
    <div className="relative flex h-8 items-center border border-[#c8c9cc] bg-[#eeeff1] pl-[9px]">
      <Svg className="mr-[7px]"><path d="M.5 .5H13.5V15.5H.5zM2 3.500H3M2 6.500H3M2 9.500H3M2 12.500H3" stroke="#6a6a6a" /><path d="M5.5 3.5H15.5V11.500H10L7.500 14V11.5H5.5z" fill="#fff" stroke="#6a6a6a" /><path d="M8 6.500H13M8 8.5H13" stroke="#6a6a6a" /></Svg>
      <ExportChart />
      <Svg w={5} h={3} className="ml-[1px]"><path d="M0 0H5L2.5 3z" fill="#6a6a6a" /></Svg>
      <TSep className="ml-[8px] mr-[7px]" />
      <T w={33} className="mr-[7px] text-xs font-bold text-[#4c4c4c]">Filter:</T>
      <div className="w-7"><Funnel><path d="M8.5 8.5H15.5V15.5H8.5z" fill="#e3f3fa" stroke="#6a6a6a" /><path d="M10 10L13 13L15 10" stroke="#6a6a6a" /></Funnel></div>
      <Funnel><path d="M8 8.5H16M8 11.5H16M8 14.5H16" stroke="#4f9fd4" strokeWidth="2" strokeDasharray="2 1" /></Funnel>
      <TSep className="ml-[9px] mr-[9px]" />
      <div className="w-[26px]"><TableIcon /></div>
      <div className="w-7"><Svg><path d="M.5 1.500H8.500V9.500H.5zM2 3L4 6L8 3M7.5 6.500H14.5V15.5H7.5zM9 9L11 12L14 8" fill="#e3f3fa" stroke="#6a6a6a" /><path d="M10 1.5H13.5V5M11.5 3.500L13.5 5.5L15.5 3.5M5.5 13.500H2.500V10.500M.500 12.500L2.500 10.500L4.500 12.500" stroke="#4c4c4c" strokeWidth="1.1" /></Svg></div>
      <Svg w={12} h={13}><path d="M.5 .5H11.5V12.5H.5zM3 2L5 6L10 3M5 6L6 12" stroke="#c3c3c3" /></Svg>
      <TSep className="ml-[11px] mr-[8px]" />
      <Svg><path d="M.5 0V15.5H16" stroke="#6a6a6a" /><path d="M3 3C9 3 9 7 9 11M5.5 8L9 11.5L12.5 8" stroke="#4f9fd4" strokeWidth="1.4" /></Svg>
      <TSep className="ml-[8px] mr-[7px]" />
      <div className="flex size-[23px] items-center justify-center bg-[#98d9fb]"><Svg><path d="M7.5 1.5H15.5V9.5H9M9 3L12 5L15 2M12 5V9" fill="#e3f3fa" stroke="#6a6a6a" /><path d="M0 1L9 8.500L6 9L8 13.500L6 14.500L4 10.5L1 13z" fill="#4c4c4c" /></Svg></div>
      <Chevron s={7} className="ml-[3px] mr-[12px]" />
      <Svg className="mr-[11px]"><circle cx="6" cy="6" r="5" fill="#fff" stroke="#4f9fd4" strokeWidth="1.6" /><path d="M3.5 6H8.5M6 3.5V8.5" stroke="#4f9fd4" strokeWidth="1.5" /><path d="M10 10L15 15" stroke="#cf9447" strokeWidth="2.4" /></Svg>
      <Svg><path d="M1 5V1H5M1.5 1.5L6 6M11 1H15V5M14.5 1.5L10 6M1 11V15H5M1.5 14.5L6 10M15 11V15H11M14.5 14.5L10 10" stroke="#b7b7b7" strokeWidth="1.5" /></Svg>
      <Svg w={14} h={15} className="ml-auto mr-[9px]"><path d="M.5 .5H3V3H.5zM.5 4.5H3V7H.5zM.5 8.5H3V11H.5zM.5 12.5H3V14.500H.5zM5 1.500H14M5 5.500H14M5 9.500H14M5 13.500H14" stroke="#bdbdbd" /></Svg>
      <Chevron s={7} sw={1.9} className="mr-2" />
      <div className="absolute left-[31px] top-[28px] z-10 h-[56px] w-[162px] border border-[#c8c9cc] bg-white pl-2 pt-[1px] text-[#1e1e1e]">
        <div className="flex h-[26px] items-center gap-[9px]"><ExportChart /><T w={94} className="text-xs">Export As Graphic</T></div>
        <div className="flex h-[26px] items-center gap-[9px]"><TableIcon arrow /><T w={80} className="text-xs">Export As Table</T></div>
      </div>
    </div>
  );
}

function Center() {
  return (
    <div className="ml-[6px] mt-[6px] flex w-[852px] shrink-0 flex-col">
      <div className="flex h-[22px] items-center justify-between pr-[5px]">
        <div className="flex h-[22px] w-[146px] items-center rounded-t-[3px] bg-[#d2d4d8] pl-[6px] pt-[3px]">
          <MapIcon className="mr-[5px]" /><T w={93} className="text-xs text-[#4c4c4c]">Data Visualization</T><Close className="ml-[10px]" />
        </div>
        <Chevron s={9} sw={1.2} />
      </div>
      <div className="h-[3px] bg-[#d2d4d8]" />
      <div className="border border-t-0 border-[#cfd1d4]"><MapView /><MapStatus /></div>
      <div className="mt-[6px] flex h-[22px] items-center justify-between pr-[5px]">
        <div className="flex h-[22px] w-[260px] items-center rounded-t-[3px] bg-[#d2d4d8] pl-[6px] pt-[3px]">
          <BarIcon className="mr-[5px]" /><T w={207} className="text-xs text-[#4c4c4c]">CountyElections2020 ...0 by state_name</T><Close className="ml-[10px]" />
        </div>
        <Chevron s={9} sw={1.2} />
      </div>
      <div className="h-[3px] bg-[#d2d4d8]" />
      <div className="border border-t-0 border-[#cfd1d4]"><ChartToolbar /><Chart /></div>
    </div>
  );
}

/* ---------- chart properties ---------- */

function Properties() {
  const tabs = [["Series", 35, "w-[45px]"], ["Axes", 27, "w-[37px]"], ["Guides", 40, "w-[50px]"], ["Format", 41, "w-[62px]"]];
  return (
    <div className="relative ml-[6px] mt-[6px] flex w-[287px] shrink-0 flex-col text-xs text-[#4c4c4c]">
      <div className="flex h-[581px] flex-col rounded-t-[3px] border border-[#0079c1] bg-[#f7f9f8]">
        <div className="flex h-[30px] items-center pl-[6px]">
          <T w={113} className="text-[15px] text-[#0079c1]">Chart Properties</T>
          <Chevron s={9} className="ml-[113px] mr-[10px]" /><Pin className="mb-[2px] mr-[10px]" /><Close />
        </div>
        <div className="flex h-[22px] items-center pl-[9px]"><BarIcon w={23} className="-mt-1 mr-[6px]" /><T w={239} className="text-[15px]">Mean of voter_turnout_2020 by sta...</T></div>
        <div className="flex h-[41px] items-center pl-[7px]">
          <div className="relative mr-[10px] flex h-6 items-center"><T w={28} className="text-[13px] text-[#323232]">Data</T><i className="absolute -bottom-[1px] left-0 h-[2px] w-7 bg-[#0079c1]" /></div>
          {tabs.map(([t, w, c]) => <div key={t} className={c}><T w={w} className="text-[13px]">{t}</T></div>)}
          <Dots className="mr-[9px] mt-[2px]" />
          <Svg w={16} h={16} className="-mt-[3px]"><circle cx="8" cy="8" r="7.5" fill="#e3f2fc" stroke="#5aa9dd" /><path d="M5.5 6.2C5.5 2.6 10.5 3 10.3 6C10.1 7.8 8 7.8 8 10M8 11.5V13" stroke="#4f9fd4" strokeWidth="1.6" /></Svg>
        </div>
        <div className="flex flex-col pl-5">
          <div className="mt-[20px] flex h-[20px] items-center pt-px"><T w={56} className="text-[13px] font-semibold">Variables</T></div>
          <div className="mt-[10px] flex h-5 items-center"><T w={89}>Category or Date</T></div>
          <div className="mt-[2px] flex items-center gap-1">
            <div className="flex h-6 w-[235px] items-center justify-between border border-[#8f8f8f] bg-white px-[3px] text-[#1e1e1e]"><T w={60}>state_name</T><Chevron s={7} /></div><ExprIcon />
          </div>
          <div className="mt-[11px] flex h-5 items-center"><T w={65}>Aggregation</T></div>
          <div className="mt-[2px] flex h-6 w-[253px] items-center justify-between border border-[#8f8f8f] bg-white px-[3px] text-[#1e1e1e]"><T w={30}>Mean</T><Chevron s={7} /></div>
          <div className="mt-[4px] flex h-5 items-center"><T w={85}>Numeric field(s)</T></div>
          <div className="mt-[4px] flex items-center gap-1 pl-5">
            <div className="flex h-[22px] w-[75px] items-center gap-[5px] border border-[#323232] bg-white pl-[12px]"><Svg w={12} h={12}><path d="M6 0V12M0 6H12" stroke="#56a35a" strokeWidth="1.8" /></Svg><T w={31}>Select</T></div><ExprIcon />
          </div>
          <div className="mt-[7px] flex items-center pl-5">
            <div className="flex h-6 w-[212px] items-center border border-[#c6c6c6] bg-white pl-[3px]"><T w={100} className="pt-px">voter_turnout_2020</T></div>
            <Svg w={10} h={10} className="ml-[5px]"><path d="M1 1L9 9M9 1L1 9" stroke="#cf6543" strokeWidth="2.2" /></Svg>
          </div>
          <div className="mt-[5px] flex h-5 items-center"><T w={94}>Split by (optional)</T><Svg w={14} h={14} className="ml-[6px]"><circle cx="7" cy="7" r="6.4" stroke="#0079c1" strokeWidth="1.1" /><path d="M7 3V4.500M5.5 6H7.3V10.5M5 10.5H9.5" stroke="#0079c1" strokeWidth="1.3" /></Svg></div>
          <div className="mt-[9px] flex items-center gap-1"><div className="flex h-6 w-[235px] items-center justify-end border border-[#8f8f8f] bg-white pr-[3px]"><Chevron s={7} /></div><ExprIcon /></div>
          <div className="mt-[12px] flex h-5 items-center pt-[2px]"><T w={72} className="text-[13px] font-semibold">Data Labels</T></div>
          <div className="mt-[2px] flex h-[20px] items-center text-[#1e1e1e]"><div className="mr-[4px] size-[14px] border border-[#868686] bg-white" /><T w={53} className="pt-px">Label bars</T></div>
          <div className="mt-[10px] flex h-5 items-center pt-[2px]"><T w={26} className="text-[13px] font-semibold">Sort</T></div>
          <div className="mt-[5px] flex h-6 w-[253px] items-center border border-[#8f8f8f] bg-white pl-[2px] pr-[3px]"><SortIcon className="mr-[7px]" /><T w={97}>Y-axis Descending</T><Chevron s={7} className="ml-auto" /></div>
        </div>
      </div>
      <div className="flex h-5 items-center pl-[6px]">
        <T w={41} className="pt-px">Catalog</T>
        <div className="-mt-px ml-[6px] flex h-[21px] w-[97px] items-center justify-center rounded-b-[3px] border border-t-0 border-[#0079c1] bg-[#f7f9f8] pt-px text-[#0079c1]"><T w={85}>Chart Properties</T></div>
      </div>
      <div className="absolute left-0 top-[527px] flex flex-col items-start text-[#b9bbbb]">
        <T w={157} className="text-[19px] leading-[28px]">Activate Windows</T>
        <T w={236} className="text-[14.5px] leading-[17px]">Go to Settings to activate Windows.</T>
      </div>
    </div>
  );
}

export default function App() {
  return (
    <div className="flex h-[768px] w-[1366px] flex-col overflow-hidden bg-[#eaeaea] font-['Noto_Sans','Open_Sans',sans-serif] text-[#4c4c4c]">
      <Ribbon />
      <div className="flex h-[613px] shrink-0">
        <Contents />
        <Center />
        <Properties />
      </div>
      <div className="h-[2px] shrink-0 bg-[#1f1f23]" />
    </div>
  );
}
